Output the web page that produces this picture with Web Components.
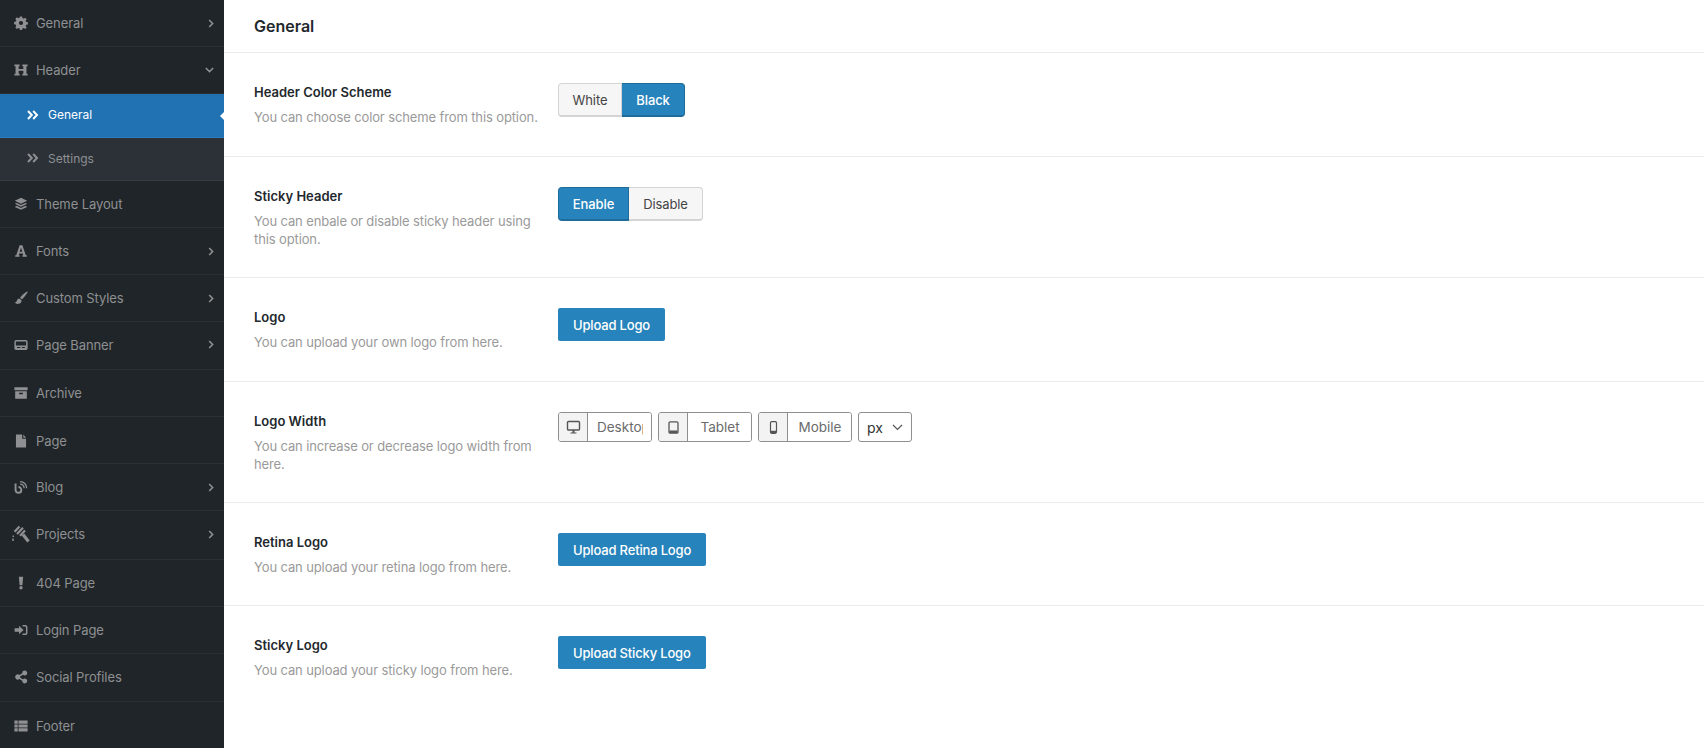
<!DOCTYPE html>
<html>
<head>
<meta charset="utf-8">
<title>General</title>
<style>
    html, body { margin: 0; height: 100%; background: #fff; overflow: hidden; }
    body { font-family: Inter, "Liberation Sans", sans-serif; }
</style>
</head>
<body>
<theme-options></theme-options>

<script>
const ICONS = {
    gear: '<path d="M7.600 .5h2.800l.4 2.200a6.500 6.500 0 0 1 1.700.7l1.800-1.300 2 2-1.300 1.800a6.500 6.500 0 0 1 .7 1.700l2.200.4v2.800l-2.200.4a6.500 6.500 0 0 1-.7 1.700l1.300 1.800-2 2-1.800-1.300a6.500 6.500 0 0 1-1.700.7l-.4 2.200H7.600l-.4-2.200a6.500 6.500 0 0 1-1.700-.7l-1.800 1.300-2-2 1.300-1.800a6.500 6.500 0 0 1-.7-1.700L.1 10.400V7.600l2.200-.4a6.500 6.500 0 0 1 .7-1.700L1.700 3.700l2-2 1.800 1.300a6.500 6.500 0 0 1 1.700-.7zM9 6.300a2.700 2.700 0 1 0 0 5.400 2.700 2.700 0 0 0 0-5.400z" fill-rule="evenodd"/>',
    heading: '<path d="M.5 2h6.800v2.200H6v3.500h6V4.200h-1.300V2h6.800v2.200H16v9.600h1.500V16h-6.800v-2.200H12v-3.900H6v3.900h1.300V16H.5v-2.200H2V4.200H.5z"/>',
    layers: '<path d="M9 1 1 4.800 9 8.600l8-3.800zM3.400 7.600 1 8.800l8 3.800 8-3.800-2.400-1.200L9 10.300zM3.400 11.400 1 12.700l8 3.800 8-3.800-2.400-1.300L9 14.100z"/>',
    font: '<path d="M7.200 1.500h3.600l4.300 13H16.500v2h-5.700v-2h1.200l-.7-2.300H6.700L6 14.500h1.200v2H1.500v-2h1.400zM9 4.800 7.300 10h3.400z" fill-rule="evenodd"/>',
    brush: '<path d="M17 .8c-1.700.5-6.800 4.800-9.200 7.800l2.500 2.300c2.900-2.800 6.900-8.100 7.300-9.600.1-.4-.3-.6-.6-.5zM7 9.500C4.700 9.700 3.900 11.500 3.500 12.900c-.3 1.100-1.300 1.900-2.700 2 1.300 1.500 3.400 2.100 5.300 1.600 2.500-.6 3.900-2.400 3.600-4.400z"/>',
    banner: '<path d="M2.800 2.500h12.400A2.300 2.300 0 0 1 17.500 4.800v8.400a2.300 2.300 0 0 1-2.300 2.300H2.800A2.300 2.300 0 0 1 .5 13.200V4.800A2.300 2.300 0 0 1 2.800 2.500zm-.4 2v5.300h13.200V4.500zm1.600 7v1.500h4v-1.500zm6 0v1.500h4v-1.500z" fill-rule="evenodd"/>',
    archive: '<path d="M.5 1.500h17v4H.5zM1.500 6.800h15v9.700h-15zm5 2v1.700h5V8.800z" fill-rule="evenodd"/>',
    file: '<path d="M2.500 .8h8v5.400h5v11h-13zM12 .8l3.500 3.900H12z"/>',
    blog: '<g fill="none" stroke="currentColor"><path d="M2 4.500v8.300a3.700 3.700 0 1 0 3.700-3.700" stroke-width="2.500"/><path d="M7.800 5.300a5 5 0 0 1 5.200 5.200" stroke-width="1.700"/><path d="M7.800 2a8.300 8.300 0 0 1 8.500 8.500" stroke-width="1.700"/></g>',
    tools: '<g fill="none" stroke="currentColor" stroke-width="2.200"><path d="M2.500 6.800 7.500 1.500M5 9 11 2.800M8 10.700 13 5.500"/><path d="M11 9.500 16.500 16.500" stroke-width="3.200"/><path d="M1.300 10.500v1.500M1 13.500v2.500" stroke-width="1.500"/></g>',
    excl: '<path d="M6.200 1h5.600l-1 11H7.200zM9 13a2.200 2.200 0 1 1 0 4.400A2.200 2.200 0 0 1 9 13z"/>',
    login: '<path d="M.8 6.800h5.700V3.600L12.300 9l-5.800 5.400v-3.200H.8zM11 2.500h3.500A2.800 2.800 0 0 1 17.300 5.300v7.400a2.800 2.800 0 0 1-2.800 2.800H11v-1.900h3.200a1.200 1.200 0 0 0 1.200-1.200V5.600a1.200 1.200 0 0 0-1.200-1.200H11z"/>',
    share: '<path d="M13.800 .8a3.200 3.200 0 1 1-2.300 5.400L7.800 8.200a3.200 3.200 0 0 1 0 1.600l3.700 2a3.200 3.200 0 1 1-.9 1.900L6.800 11.700a3.300 3.300 0 1 1 0-5.400l3.800-2a3.200 3.200 0 0 1 3.200-3.500z"/>',
    table: '<path d="M.5 2h4.300v4.200H.5zM5.800 2h11.700v4.200H5.800zM.5 7h4.300v4H.5zM5.800 7h11.700v4H5.800zM.5 11.800h4.300V16H.5zM5.800 11.800h11.700V16H5.800z"/>'
};

const CHEVRON_RIGHT = '<svg width="6" height="9" viewBox="0 0 6 9"><path d="M1.200 1 4.600 4.500 1.200 8" fill="none" stroke="currentColor" stroke-width="1.600"/></svg>';
const CHEVRON_DOWN = '<svg width="9" height="6" viewBox="0 0 9 6"><path d="M.8 1 4.500 4.600 8.200 1" fill="none" stroke="currentColor" stroke-width="1.500"/></svg>';
const DOUBLE = '<svg width="12" height="10" viewBox="0 0 12 10"><path d="M1 1 4.800 5 1 9M6.200 1 10 5 6.200 9" fill="none" stroke="currentColor" stroke-width="2"/></svg>';

class NavItem extends HTMLElement {
    constructor() {
        super();
        this.attachShadow({mode: "open"});
    }

    connectedCallback() {
        const icon = ICONS[this.getAttribute("icon")] || "";
        const arrow = this.getAttribute("arrow");
        const h = Number(this.getAttribute("h") || 47);
        const size = Number(this.getAttribute("size") || 14);
        const left = (14 - size) / 2;
        this.shadowRoot.innerHTML = `
            <style>
                :host {
                    display: flex;
                    align-items: center;
                    box-sizing: border-box;
                    height: ${h}px;
                    padding-left: 14px;
                    padding-right: 10px;
                    padding-bottom: ${h > 47 ? 2 : 0}px;
                    color: #8e9092;
                    font-size: 13px;
                    letter-spacing: -0.1px;
                    background: #202529;
                    border-bottom: 1px solid #2d3033;
                }
                svg.icon { width: ${size}px; height: ${size}px; fill: currentColor; flex: none; margin-left: ${left}px; margin-right: ${22 - size - left}px; }
                .label { flex: 1; }
                .arrow { display: flex; color: #8e9092; }
            </style>
            <svg class="icon" viewBox="0 0 18 18">${icon}</svg>
            <span class="label"><slot></slot></span>
            <span class="arrow">${arrow === "down" ? CHEVRON_DOWN : arrow === "right" ? CHEVRON_RIGHT : ""}</span>
        `;
    }
}
customElements.define("nav-item", NavItem);

class NavSubItem extends HTMLElement {
    constructor() {
        super();
        this.attachShadow({mode: "open"});
        this.shadowRoot.innerHTML = `
            <style>
                :host {
                    display: flex;
                    position: relative;
                    align-items: center;
                    box-sizing: border-box;
                    padding-left: 27px;
                    padding-bottom: 2px;
                    gap: 9px;
                    font-size: 12px;
                    height: 44px;
                    color: #8e9092;
                    background: #2c3138;
                    border-bottom: 1px solid #383d44;
                }
                :host([active]) {
                    color: #fff;
                    background: #2172b2;
                    border-bottom-color: #2b7dbd;
                }
                :host([active])::after {
                    content: "";
                    position: absolute;
                    right: 0;
                    top: 50%;
                    margin-top: -4px;
                    border: 4px solid transparent;
                    border-left-width: 0;
                    border-right-color: #fff;
                }
                svg { display: block; }
            </style>
            ${DOUBLE}
            <span><slot></slot></span>
        `;
    }
}
customElements.define("nav-sub-item", NavSubItem);

class SideNav extends HTMLElement {
    constructor() {
        super();
        this.attachShadow({mode: "open"});
        this.shadowRoot.innerHTML = `
            <style>
                :host {
                    display: block;
                    width: 224px;
                    flex: none;
                    height: 748px;
                    overflow: hidden;
                    background: #202529;
                }
            </style>
            <nav-item icon="gear" arrow="right">General</nav-item>
            <nav-item icon="heading" arrow="down">Header</nav-item>
            <nav-sub-item active style="height:44px">General</nav-sub-item>
            <nav-sub-item style="height:43px">Settings</nav-sub-item>
            <nav-item icon="layers">Theme Layout</nav-item>
            <nav-item icon="font" arrow="right">Fonts</nav-item>
            <nav-item icon="brush" arrow="right">Custom Styles</nav-item>
            <nav-item icon="banner" arrow="right" h="48">Page Banner</nav-item>
            <nav-item icon="archive">Archive</nav-item>
            <nav-item icon="file" style="padding-top:2px">Page</nav-item>
            <nav-item icon="blog" arrow="right">Blog</nav-item>
            <nav-item icon="tools" arrow="right" h="49" size="18">Projects</nav-item>
            <nav-item icon="excl">404 Page</nav-item>
            <nav-item icon="login">Login Page</nav-item>
            <nav-item icon="share" h="48">Social Profiles</nav-item>
            <nav-item icon="table" style="padding-top:2px">Footer</nav-item>
        `;
    }
}
customElements.define("side-nav", SideNav);

class OptionRow extends HTMLElement {
    constructor() {
        super();
        this.attachShadow({mode: "open"});
        this.shadowRoot.innerHTML = `
            <style>
                :host {
                    display: flex;
                    box-sizing: border-box;
                    padding: 30px 30px 0 30px;
                    border-bottom: 1px solid #ebebeb;
                }
                :host([last]) { border-bottom: 0; }
                .info { width: 290px; margin-right: 14px; flex: none; }
                h3 {
                    margin: 0 0 7px;
                    font-size: 13px;
                    line-height: 18px;
                    font-weight: 600;
                    color: #23282d;
                }
                p {
                    margin: 0;
                    font-size: 13px;
                    letter-spacing: -0.12px;
                    line-height: 18px;
                    color: #9a9a9a;
                }
                .control { display: flex; gap: 6px; align-items: flex-start; }
            </style>
            <div class="info">
                <h3 part="title"></h3>
                <p><slot name="desc"></slot></p>
            </div>
            <div class="control"><slot></slot></div>
        `;
    }

    connectedCallback() {
        this.shadowRoot.querySelector("h3").textContent = this.getAttribute("heading");
        this.style.height = this.getAttribute("h") + "px";
    }
}
customElements.define("option-row", OptionRow);

class ToggleGroup extends HTMLElement {
    constructor() {
        super();
        this.attachShadow({mode: "open"});
    }

    connectedCallback() {
        const options = this.getAttribute("options").split(",");
        const selected = this.getAttribute("selected");
        const widths = this.getAttribute("widths").split(",");
        const btns = options.map((o, i) =>
            `<button class="${o === selected ? "on" : ""}" style="width:${widths[i]}px">${o}</button>`
        ).join("");
        this.shadowRoot.innerHTML = `
            <style>
                :host { display: inline-flex; }
                button {
                    box-sizing: border-box;
                    height: 34px;
                    padding: 0;
                    font: 13px Inter, "Liberation Sans", sans-serif;
                    letter-spacing: -0.1px;
                    color: #444;
                    background: #f6f6f6;
                    border: 1px solid #d4d4d4;
                    border-bottom-width: 2px;
                    border-left-width: 0;
                }
                button:first-of-type { border-left-width: 1px; border-radius: 4px 0 0 4px; }
                button:last-of-type { border-radius: 0 4px 4px 0; }
                button.on {
                    color: #fff;
                    font-weight: 500;
                    background: #2783bb;
                    border-color: #1e6b9c;
                }
            </style>
            ${btns}
        `;
    }
}
customElements.define("toggle-group", ToggleGroup);

class UploadButton extends HTMLElement {
    constructor() {
        super();
        this.attachShadow({mode: "open"});
        this.shadowRoot.innerHTML = `
            <style>
                :host {
                    display: inline-flex;
                    align-items: center;
                    box-sizing: border-box;
                    height: 33px;
                    padding: 0 15px;
                    font-size: 13px;
                    font-weight: 500;
                    letter-spacing: -0.17px;
                    color: #fff;
                    background: #2783bb;
                    border-radius: 2px;
                }
            </style>
            <slot></slot>
        `;
    }
}
customElements.define("upload-button", UploadButton);

class SizeInput extends HTMLElement {
    constructor() {
        super();
        this.attachShadow({mode: "open"});
    }

    connectedCallback() {
        const paths = {
            desktop: '<rect x="1.500" y="1.500" width="12" height="8.500" rx="1" fill="none" stroke="currentColor" stroke-width="1.400"/><path d="M4.500 12.500h6v1h-6zM6.500 10h2v2.500h-2z"/>',
            tablet: '<rect x="3" y="1.800" width="9" height="11.400" rx="1.300" fill="none" stroke="currentColor" stroke-width="1.300"/><path d="M3.500 10.500h8v2.500h-8z"/>',
            mobile: '<rect x="4.500" y="1.700" width="6" height="11.600" rx="1.200" fill="none" stroke="currentColor" stroke-width="1.200"/><path d="M5 10.800h5v2.300H5z"/>'
        };
        const kind = this.getAttribute("kind");
        const text = this.getAttribute("placeholder");
        this.shadowRoot.innerHTML = `
            <style>
                :host {
                    display: inline-flex;
                    box-sizing: border-box;
                    width: 94px;
                    height: 30px;
                    border: 1px solid #8f8f8f;
                    border-radius: 3px;
                    overflow: hidden;
                }
                .icon {
                    width: 28px;
                    flex: none;
                    display: flex;
                    align-items: center;
                    justify-content: center;
                    background: #f3f3f3;
                    border-right: 1px solid #8f8f8f;
                    color: #555;
                }
                svg { width: 15px; height: 15px; fill: currentColor; }
                input {
                    width: 100%;
                    min-width: 0;
                    border: 0;
                    padding: 0 8px 0 9px;
                    outline: 0;
                    text-align: center;
                    font: 13.5px Inter, "Liberation Sans", sans-serif;
                    color: #6b6b6b;
                    background: #fff;
                }
                input::placeholder { color: #6b6b6b; opacity: 1; }
            </style>
            <span class="icon"><svg viewBox="0 0 15 15">${paths[kind]}</svg></span>
            <input placeholder="${text}" aria-label="${text}">
        `;
    }
}
customElements.define("size-input", SizeInput);

class UnitSelect extends HTMLElement {
    constructor() {
        super();
        this.attachShadow({mode: "open"});
        this.shadowRoot.innerHTML = `
            <style>
                :host {
                    display: inline-flex;
                    align-items: center;
                    justify-content: space-between;
                    box-sizing: border-box;
                    width: 54px;
                    height: 30px;
                    padding: 0 8px 0 8px;
                    border: 1px solid #8f8f8f;
                    border-radius: 3px;
                    font-size: 14px;
                    color: #333;
                }
                svg { width: 11px; height: 7px; }
            </style>
            <span>px</span>
            <svg viewBox="0 0 11 7"><path d="M1 1l4.500 4.500L10 1" fill="none" stroke="#555" stroke-width="1.200"/></svg>
        `;
    }
}
customElements.define("unit-select", UnitSelect);

class ThemeOptions extends HTMLElement {
    constructor() {
        super();
        this.attachShadow({mode: "open"});
        this.shadowRoot.innerHTML = `
            <style>
                :host { display: flex; width: 1704px; height: 748px; overflow: hidden; background: #fff; }
                main { flex: 1; min-width: 0; }
                header {
                    box-sizing: border-box;
                    height: 53px;
                    padding: 16px 30px 0;
                    font-size: 16px;
                    line-height: 20px;
                    font-weight: 600;
                    color: #23282d;
                    border-bottom: 1px solid #ebebeb;
                }
            </style>
            <side-nav></side-nav>
            <main>
                <header>General</header>
                <option-row heading="Header Color Scheme" h="104">
                    <span slot="desc">You can choose color scheme from this option.</span>
                    <toggle-group options="White,Black" selected="Black" widths="64,63"></toggle-group>
                </option-row>
                <option-row heading="Sticky Header" h="121">
                    <span slot="desc">You can enbale or disable sticky header using this option.</span>
                    <toggle-group options="Enable,Disable" selected="Enable" widths="71,74"></toggle-group>
                </option-row>
                <option-row heading="Logo" h="104">
                    <span slot="desc">You can upload your own logo from here.</span>
                    <upload-button>Upload Logo</upload-button>
                </option-row>
                <option-row heading="Logo Width" h="121">
                    <span slot="desc">You can increase or decrease logo width from here.</span>
                    <size-input kind="desktop" placeholder="Desktop"></size-input>
                    <size-input kind="tablet" placeholder="Tablet"></size-input>
                    <size-input kind="mobile" placeholder="Mobile"></size-input>
                    <unit-select></unit-select>
                </option-row>
                <option-row heading="Retina Logo" h="103">
                    <span slot="desc">You can upload your retina logo from here.</span>
                    <upload-button>Upload Retina Logo</upload-button>
                </option-row>
                <option-row heading="Sticky Logo" h="104" last>
                    <span slot="desc">You can upload your sticky logo from here.</span>
                    <upload-button>Upload Sticky Logo</upload-button>
                </option-row>
            </main>
        `;
    }
}
customElements.define("theme-options", ThemeOptions);
</script>
</body>
</html>
